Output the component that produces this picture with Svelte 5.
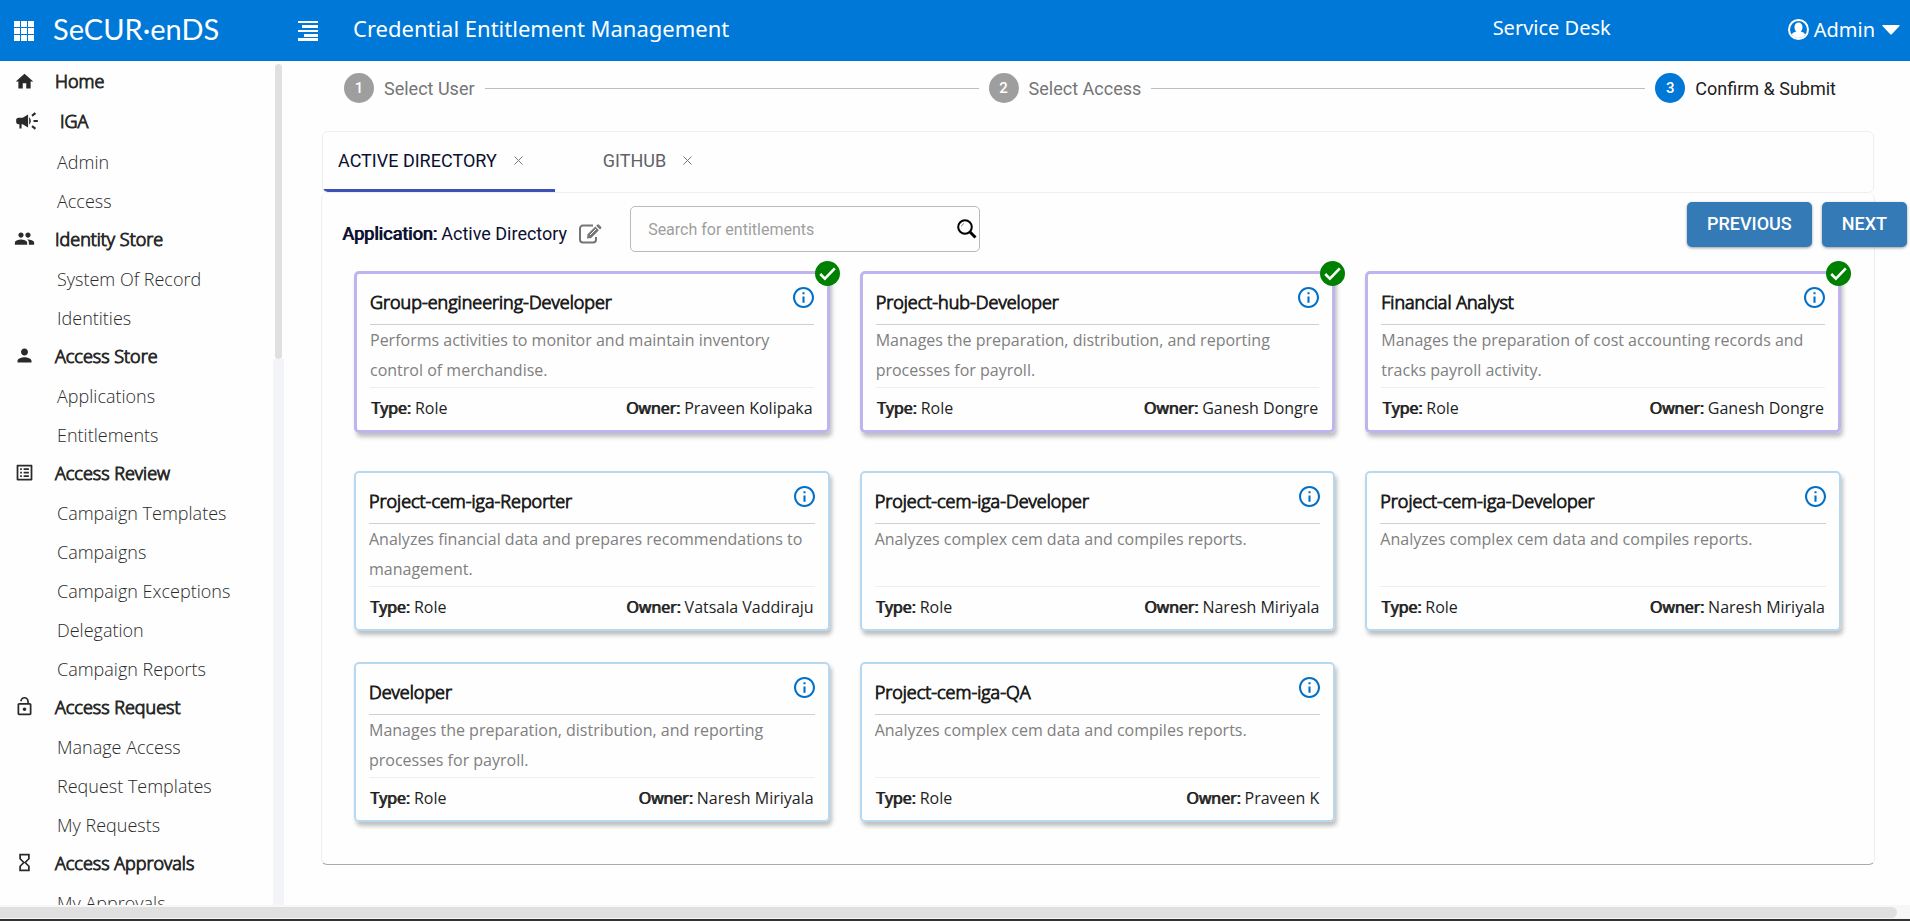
<script lang="ts">
	interface Entitlement {
		id: number;
		name: string;
		description: string;
		type: string;
		owner: string;
		selected: boolean;
	}

	const menu = [
		{ icon: 'home', label: 'Home', items: [] },
		{ icon: 'campaign', label: 'IGA', items: ['Admin', 'Access'] },
		{ icon: 'people', label: 'Identity Store', items: ['System Of Record', 'Identities'] },
		{ icon: 'person', label: 'Access Store', items: ['Applications', 'Entitlements'] },
		{
			icon: 'list',
			label: 'Access Review',
			items: [
				'Campaign Templates',
				'Campaigns',
				'Campaign Exceptions',
				'Delegation',
				'Campaign Reports'
			]
		},
		{
			icon: 'lock',
			label: 'Access Request',
			items: ['Manage Access', 'Request Templates', 'My Requests']
		},
		{ icon: 'hourglass', label: 'Access Approvals', items: ['My Approvals'] }
	];

	// 24x24 icon shapes for the sidebar
	const icons = {
		home: 'M10 20v-6h4v6h5v-8h3L12 3 2 12h3v8z',
		campaign:
			'M18 11v2h4v-2h-4zm-2 6.61c.96.71 2.21 1.65 3.2 2.39.4-.53.8-1.07 1.2-1.6-.99-.74-2.24-1.68-3.2-2.4-.4.54-.8 1.08-1.2 1.61zM20.4 5.6c-.4-.53-.8-1.07-1.2-1.6-.99.74-2.24 1.68-3.2 2.4.4.53.8 1.07 1.2 1.6.96-.72 2.21-1.65 3.2-2.4zM4 9c-1.1 0-2 .9-2 2v2c0 1.1.9 2 2 2h1v4h2v-4h1l5 3V6L8 9H4zm11.5 3c0-1.33-.58-2.53-1.5-3.35v6.69c.92-.81 1.5-2.01 1.5-3.34z',
		people:
			'M16 11c1.66 0 2.99-1.34 2.99-3S17.66 5 16 5s-3 1.34-3 3 1.34 3 3 3zm-8 0c1.66 0 2.99-1.34 2.99-3S9.66 5 8 5 5 6.34 5 8s1.34 3 3 3zm0 2c-2.33 0-7 1.17-7 3.5V19h14v-2.5c0-2.33-4.67-3.5-7-3.5zm8 0c-.29 0-.62.02-.97.05 1.16.84 1.97 1.97 1.97 3.45V19h6v-2.5c0-2.33-4.67-3.5-7-3.5z',
		person:
			'M12 12c2.21 0 4-1.79 4-4s-1.79-4-4-4-4 1.79-4 4 1.79 4 4 4zm0 2c-2.67 0-8 1.34-8 4v2h16v-2c0-2.66-5.33-4-8-4z',
		list: 'M19 5v14H5V5h14m1.1-2H3.9c-.5 0-.9.4-.9.9v16.2c0 .4.4.9.9.9h16.2c.4 0 .9-.5.9-.9V3.9c0-.5-.5-.9-.9-.9zM11 7h6v2h-6V7zm0 4h6v2h-6v-2zm0 4h6v2h-6zM7 7h2v2H7zm0 4h2v2H7zm0 4h2v2H7z',
		lock: 'M12 17c1.1 0 2-.9 2-2s-.9-2-2-2-2 .9-2 2 .9 2 2 2zm6-9h-1V6c0-2.76-2.24-5-5-5S7 3.24 7 6h1.9c0-1.71 1.39-3.1 3.1-3.1 1.71 0 3.1 1.39 3.1 3.1v2H6c-1.1 0-2 .9-2 2v10c0 1.1.9 2 2 2h12c1.1 0 2-.9 2-2V10c0-1.1-.9-2-2-2zm0 12H6V10h12v10z',
		hourglass:
			'M6 2v6h.01L6 8.01 10 12l-4 4 .01.01H6V22h12v-5.99h-.01L18 16l-4-4 4-3.99-.01-.01H18V2H6zm10 14.5V20H8v-3.5l4-4 4 4zm-4-5l-4-4V4h8v3.5l-4 4z'
	};

	const steps = ['Select User', 'Select Access', 'Confirm & Submit'];
	let currentStep = $state(2);

	let tabs = $state(['Active Directory', 'GitHub']);
	let activeTab = $state('Active Directory');
	let search = $state('');

	let entitlements: Entitlement[] = $state([
		{
			id: 1,
			name: 'Group-engineering-Developer',
			description: 'Performs activities to monitor and maintain inventory control of merchandise.',
			type: 'Role',
			owner: 'Praveen Kolipaka',
			selected: true
		},
		{
			id: 2,
			name: 'Project-hub-Developer',
			description: 'Manages the preparation, distribution, and reporting processes for payroll.',
			type: 'Role',
			owner: 'Ganesh Dongre',
			selected: true
		},
		{
			id: 3,
			name: 'Financial Analyst',
			description:
				'Manages the preparation of cost accounting records and tracks payroll activity.',
			type: 'Role',
			owner: 'Ganesh Dongre',
			selected: true
		},
		{
			id: 4,
			name: 'Project-cem-iga-Reporter',
			description: 'Analyzes financial data and prepares recommendations to management.',
			type: 'Role',
			owner: 'Vatsala Vaddiraju',
			selected: false
		},
		{
			id: 5,
			name: 'Project-cem-iga-Developer',
			description: 'Analyzes complex cem data and compiles reports.',
			type: 'Role',
			owner: 'Naresh Miriyala',
			selected: false
		},
		{
			id: 6,
			name: 'Project-cem-iga-Developer',
			description: 'Analyzes complex cem data and compiles reports.',
			type: 'Role',
			owner: 'Naresh Miriyala',
			selected: false
		},
		{
			id: 7,
			name: 'Developer',
			description: 'Manages the preparation, distribution, and reporting processes for payroll.',
			type: 'Role',
			owner: 'Naresh Miriyala',
			selected: false
		},
		{
			id: 8,
			name: 'Project-cem-iga-QA',
			description: 'Analyzes complex cem data and compiles reports.',
			type: 'Role',
			owner: 'Praveen K',
			selected: false
		}
	]);

	let visible = $derived(
		entitlements.filter((e) => e.name.toLowerCase().includes(search.toLowerCase()))
	);

	const closeTab = (tab: string) => {
		tabs = tabs.filter((t) => t !== tab);
		if (activeTab === tab) activeTab = tabs[0];
	};
</script>

<div class="page">
	<header class="topbar">
		<div class="brand">
			<button class="icon-btn" aria-label="Apps">
				<svg width="20" height="20" viewBox="0 0 20 20" fill="currentColor">
					{#each [0, 7, 14] as y}
						{#each [0, 7, 14] as x}
							<rect {x} {y} width="6" height="6" />
						{/each}
					{/each}
				</svg>
			</button>
			<a class="logo" href="#home">SeCUR·enDS</a>
		</div>
		<button class="icon-btn" aria-label="Toggle menu">
			<svg width="20" height="20" viewBox="0 0 20 20" fill="currentColor">
				<path d="M0 0h20v2H0zM4 4h16v3H4zM0 9h20v2H0zM6 13h14v3H6zM0 17h20v3H0z" />
			</svg>
		</button>
		<h1>Credential Entitlement Management</h1>
		<a class="service" href="#service-desk">Service Desk</a>
		<button class="account">
			<svg width="21" height="21" viewBox="0 0 21 21">
				<circle cx="10.500" cy="10.500" r="9.500" fill="none" stroke="currentColor" stroke-width="2" />
				<path
					fill="currentColor"
					d="M10.500 3.500a4 4.500 0 0 1 4 4.500c0 2-.8 3.600-1.800 4.400 2 .5 3.900 1.200 4.600 3.200a8.500 8.500 0 0 1-13.600 0c.7-2 2.600-2.700 4.600-3.200C7.300 11.600 6.500 10 6.500 8a4 4.500 0 0 1 4-4.500z"
				/>
			</svg>
			Admin
			<svg class="caret" width="18" height="10" viewBox="0 0 18 10" fill="currentColor">
				<path d="M1 0h16q1 0 .5 1L10 9q-1 1-2 0L.5 1Q0 0 1 0z" />
			</svg>
		</button>
	</header>

	<div class="body">
		<aside>
			<nav>
				{#each menu as group}
					<a class="group {group.icon}" href="#{group.icon}">
						<svg viewBox="0 0 24 24" fill="currentColor"><path d={icons[group.icon]} /></svg>
						{group.label}
					</a>
					{#each group.items as item}
						<a class="item" href="#{group.icon}">{item}</a>
					{/each}
				{/each}
			</nav>
			<div class="track"><div class="thumb"></div></div>
		</aside>

		<main>
			<ol class="stepper">
				{#each steps as step, i}
					{#if i > 0}
						<li class="line" aria-hidden="true"></li>
					{/if}
					<li class="step" class:current={i === currentStep}>
						<span class="number">{i + 1}</span>
						{step}
					</li>
				{/each}
			</ol>

			<div class="tabs">
				{#each tabs as tab}
					<div class="tab" class:active={tab === activeTab}>
						<button class="tab-name" onclick={() => (activeTab = tab)}>{tab}</button>
						<button class="close" aria-label="Close {tab}" onclick={() => closeTab(tab)}>
							<svg width="9" height="9" viewBox="0 0 9 9" stroke="currentColor">
								<path d="M.5 .5l8 8M8.500 .5l-8 8" />
							</svg>
						</button>
					</div>
				{/each}
			</div>

			<section class="panel">
				<div class="toolbar">
					<p class="application"><b>Application:</b> {activeTab}</p>
					<button class="edit" aria-label="Edit application">
						<svg width="23" height="20" viewBox="0 0 23 20" fill="none" stroke="currentColor">
							<path
								stroke-width="2"
								d="M14 1.500H4A3 3 0 0 0 1 4.500v11a3 3 0 0 0 3 3h10a3 3 0 0 0 3-3V13"
							/>
							<path fill="currentColor" stroke="none" d="M8 14.500l.6-4.200L16.300 2.600l3.600 3.600-7.700 7.700z" />
							<path fill="currentColor" stroke="none" d="M17.200 1.700l1-1q.9-.8 1.800 0l2 2q.8.9 0 1.800l-1 1z" />
							<path stroke="#fff" d="M11 11l6-6" />
						</svg>
					</button>
					<div class="search">
						<input
							type="text"
							aria-label="Search for entitlements"
							placeholder="Search for entitlements"
							bind:value={search}
						/>
						<svg width="20" height="20" viewBox="0 0 20 20" fill="none" stroke="#000">
							<circle cx="8" cy="8" r="6.800" stroke-width="2" />
							<path stroke-width="3" d="M13 13l5.500 5.500" />
							<path d="M4.500 7.500Q5 5 7 4.500" stroke="#888" />
						</svg>
					</div>
					<div class="actions">
						<button onclick={() => (currentStep = Math.max(0, currentStep - 1))}>Previous</button>
						<button onclick={() => (currentStep = Math.min(2, currentStep + 1))}>Next</button>
					</div>
				</div>

				<div class="cards">
					{#each visible as card (card.id)}
						<article class="card" class:selected={card.selected}>
							{#if card.selected}
								<svg class="check" viewBox="0 0 24 24">
									<circle cx="12" cy="12" r="12" fill="#008000" />
									<path d="M5 12.500l4.500 4.500L19 7" fill="none" stroke="#fff" stroke-width="2.500" />
								</svg>
							{/if}
							<div class="card-head">
								<h2>{card.name}</h2>
								<button class="info" aria-label="Details of {card.name}">
									<svg width="21" height="21" viewBox="2 2 20 20" fill="currentColor">
										<path
											d="M11 7h2v2h-2zm0 4h2v6h-2zm1-9C6.480 2 2 6.480 2 12s4.480 10 10 10 10-4.480 10-10S17.520 2 12 2zm0 18c-4.410 0-8-3.590-8-8s3.590-8 8-8 8 3.590 8 8-3.590 8-8 8z"
										/>
									</svg>
								</button>
							</div>
							<p class="description">{card.description}</p>
							<div class="card-foot">
								<span><b>Type:</b> {card.type}</span>
								<span><b>Owner:</b> {card.owner}</span>
							</div>
						</article>
					{/each}
				</div>
			</section>
		</main>
	</div>

	<div class="hscroll"><div class="hthumb"></div></div>
</div>

<style>
	:global(body) {
		margin: 0;
		overflow: hidden;
	}

	.page {
		display: flex;
		flex-direction: column;
		height: 100vh;
		background: #fefefe;
		color: #1f1f1f;
		font-family: 'Open Sans', sans-serif;
	}

	button {
		padding: 0;
		border: 0;
		background: none;
		color: inherit;
		font: inherit;
		cursor: pointer;
	}

	a {
		color: inherit;
		text-decoration: none;
	}

	svg {
		display: block;
		flex: none;
	}

	b {
		font-weight: 400;
		text-shadow: 1px 0 0 currentColor;
	}

	/* light face thickened by an outline */
	h2,
	.group {
		font-weight: 300;
		-webkit-text-stroke: 1px currentColor;
	}

	/* Top bar */
	.topbar {
		display: flex;
		align-items: center;
		flex: none;
		height: 61px;
		padding: 0 10px 0 14px;
		box-sizing: border-box;
		background: #0078d7;
		color: #fff;
		font-family: 'Noto Sans', sans-serif;
	}

	.brand {
		display: flex;
		align-items: center;
		gap: 19px;
		width: 284px;
	}

	.logo {
		padding-bottom: 4px;
		font-family: Lato, sans-serif;
		font-size: 29px;
		line-height: 32px;
	}

	h1 {
		margin: 0 auto 0 35px;
		padding-bottom: 5px;
		font-size: 22px;
		font-weight: 400;
	}

	.service {
		margin-right: 177px;
		padding-bottom: 6px;
		font-size: 20px;
	}

	.account {
		display: flex;
		align-items: center;
		gap: 5px;
		padding-bottom: 2px;
		font-size: 20px;
	}

	.caret {
		margin-left: 2px;
	}

	.body {
		display: flex;
		flex: 1;
		min-height: 0;
	}

	/* Sidebar */
	aside {
		display: flex;
		flex: none;
		width: 284px;
		overflow: hidden;
	}

	nav {
		flex: 1;
		color: #2a2a2a;
		font-size: 18px;
		font-weight: 300;
	}

	.group {
		display: flex;
		align-items: center;
		height: 39px;
		padding-left: 14px;
		gap: 20px;
	}

	.group svg {
		width: 21px;
		height: 21px;
	}

	nav .home,
	nav .campaign {
		height: 40px;
	}

	.campaign svg {
		width: 26px;
		height: 26px;
	}

	.item {
		display: block;
		padding: 3px 0 0 57px;
		line-height: 36px;
	}

	.track {
		width: 11px;
		padding-top: 3px;
		background: linear-gradient(#fefefe 298px, #f3f4f8 298px);
	}

	.thumb {
		width: 7px;
		height: 295px;
		margin-left: 2px;
		border-radius: 4px;
		background: #e0e0e0;
	}

	/* Main area */
	main {
		display: flex;
		flex: 1;
		flex-direction: column;
		min-width: 0;
		padding: 12px 35px 0 37px;
		font-family: Roboto, sans-serif;
		font-size: 18px;
	}

	.stepper {
		display: flex;
		align-items: center;
		gap: 10px;
		margin: 0;
		padding: 0 39px 0 23px;
		color: #757575;
		list-style: none;
	}

	.step {
		display: flex;
		align-items: center;
		gap: 10px;
	}

	.number {
		width: 30px;
		border-radius: 50%;
		background: #9e9e9e;
		color: #fff;
		font-size: 15px;
		font-weight: 500;
		line-height: 30px;
		text-align: center;
	}

	.current {
		color: #212121;
	}

	.current .number {
		background: #0078d7;
	}

	.line {
		flex: 1;
		height: 1px;
		background: #bdbdbd;
	}

	.tabs {
		display: flex;
		height: 60px;
		margin: 28px 1px 0;
		border: 1px solid #eee;
		border-radius: 6px;
		overflow: hidden;
	}

	.tab {
		display: flex;
		align-items: center;
		gap: 17px;
		min-width: 231px;
		padding: 0 32px 0 15px;
		border-bottom: 3px solid transparent;
		box-sizing: border-box;
		color: #5f6368;
	}

	.tab + .tab {
		padding-left: 48px;
	}

	.tab.active {
		border-color: #3f51b5;
		color: #0b1030;
	}

	.tab-name {
		text-transform: uppercase;
	}

	.close {
		color: #777;
	}

	.panel {
		padding: 9px 33px 42px 32px;
		border: 1px solid #eee;
		border-top: 0;
		border-bottom-color: #aaa;
		border-radius: 6px;
	}

	.toolbar {
		display: flex;
		align-items: flex-start;
		margin: 0 -66px 19px -12px;
	}

	.application {
		margin: 0;
		padding-top: 18px;
		color: #0b1030;
		line-height: 28px;
	}

	.edit {
		margin: 22px 28px 0 12px;
		color: #757575;
	}

	.search {
		display: flex;
		align-items: center;
		width: 350px;
		height: 46px;
		margin-top: 4px;
		padding: 0 2px 0 17px;
		border: 1px solid #bbb;
		border-radius: 5px;
		box-sizing: border-box;
	}

	input {
		flex: 1;
		min-width: 0;
		padding: 0;
		border: 0;
		outline: 0;
		background: none;
		font: inherit;
		font-size: 16px;
	}

	input::placeholder {
		color: #9e9e9e;
	}

	.actions {
		display: flex;
		gap: 10px;
		margin-left: auto;
	}

	.actions button {
		height: 45px;
		padding: 0 20px 2px;
		border-radius: 5px;
		background: #337ab7;
		box-shadow: 0 1px 3px rgba(0, 0, 0, 0.4);
		color: #fff;
		font-size: 18px;
		font-weight: 500;
		text-transform: uppercase;
	}

	/* Entitlement cards */
	.cards {
		display: grid;
		grid-template-columns: repeat(3, 1fr);
		gap: 31px 30px;
		font-family: 'Open Sans', sans-serif;
		font-size: 16px;
	}

	.card {
		position: relative;
		padding: 0 13px;
		border: 2px solid #b8d8f0;
		border-radius: 5px;
		box-shadow: 2px 4px 4px rgba(0, 0, 0, 0.25);
	}

	.card.selected {
		margin-bottom: 7px;
		border: 3px solid #c0b4ee;
	}

	.check {
		position: absolute;
		top: -13px;
		right: -13px;
		width: 25px;
		height: 25px;
	}

	.card-head {
		display: flex;
		justify-content: space-between;
		height: 50px;
		border-bottom: 1px solid #d0d0d0;
	}

	h2 {
		margin: 0;
		padding-top: 16px;
		font-size: 18px;
		line-height: 24px;
	}

	.info {
		align-self: flex-start;
		padding-top: 13px;
		color: #0070c8;
	}

	.description {
		height: 60px;
		margin: 0;
		padding-bottom: 2px;
		border-bottom: 1px solid #eee;
		color: #808080;
		line-height: 30px;
	}

	.card-foot {
		display: flex;
		justify-content: space-between;
		padding: 0 1px 2px;
		line-height: 40px;
	}

	/* Bottom scrollbar */
	.hscroll {
		flex: none;
		padding: 2px 13px 1px 0;
		border-bottom: 2px solid #333;
		background: #f7f7f9;
	}

	.hthumb {
		height: 11px;
		border-radius: 0 6px 6px 0;
		background: #e0e0e0;
	}
</style>
